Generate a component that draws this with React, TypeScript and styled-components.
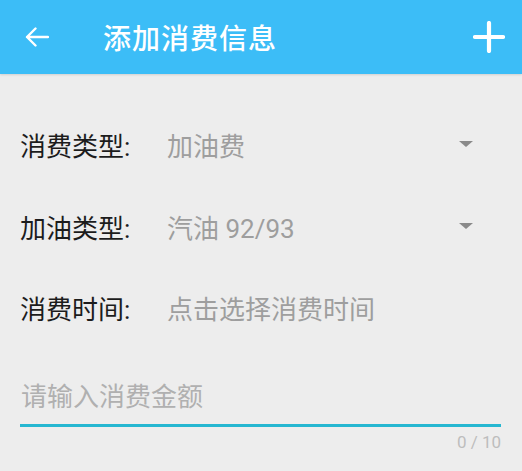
import { FC } from "react";
import styled, { createGlobalStyle } from "styled-components";

const GlobalStyle = createGlobalStyle`
  html, body {
    margin: 0;
    padding: 0;
    background: #ededed;
  }
  body {
    font-family: Roboto, "Noto Sans CJK SC", sans-serif;
  }
`;

const Page = styled.div`
  width: 522px;
  height: 471px;
  background: #ededed;
  overflow: hidden;
`;

const Toolbar = styled.header`
  height: 74px;
  background: #3cbdf7;
  display: flex;
  align-items: center;
  padding: 0 17px 0 25px;
  box-sizing: border-box;
  box-shadow: 0 1px 2px rgba(0, 0, 0, 0.12);
`;

const IconButton = styled.button`
  background: none;
  border: none;
  padding: 0;
  display: flex;
  align-items: center;
  justify-content: center;
  cursor: pointer;
`;

const Title = styled.h1`
  margin: 0 0 0 54px;
  flex: 1;
  font-size: 28px;
  font-weight: 500;
  color: #ffffff;
  letter-spacing: 1px;
`;

const Form = styled.div`
  padding: 42px 21px 0 20px;
`;

const Row = styled.div<{ $gap?: number }>`
  display: flex;
  align-items: center;
  height: 56px;
  margin-top: ${(p) => p.$gap ?? 0}px;
`;

const Label = styled.span`
  width: 147px;
  flex-shrink: 0;
  font-size: 26px;
  color: #1c1c1c;
`;

const Value = styled.span`
  flex: 1;
  font-size: 26px;
  color: #9e9e9e;
`;

const Caret = styled.span`
  width: 0;
  height: 0;
  margin-right: 28px;
  border-left: 7px solid transparent;
  border-right: 7px solid transparent;
  border-top: 6px solid #8a8a8a;
`;

const InputWrap = styled.div`
  margin-top: 47px;
`;

const AmountInput = styled.input`
  display: block;
  width: 100%;
  box-sizing: border-box;
  border: none;
  border-bottom: 3px solid #26b7d1;
  background: transparent;
  outline: none;
  font-family: Roboto, "Noto Sans CJK SC", sans-serif;
  font-size: 26px;
  color: #212121;
  padding: 0 0 12px 1px;
  &::placeholder {
    color: #b0b0b0;
  }
`;

const Counter = styled.div`
  text-align: right;
  margin-top: 5px;
  font-size: 17px;
  color: #bdbdbd;
`;

interface FieldProps {
  label: string;
  value: string;
  dropdown?: boolean;
  gap?: number;
}

const Field: FC<FieldProps> = ({ label, value, dropdown, gap }) => (
  <Row $gap={gap}>
    <Label>{label}</Label>
    <Value>{value}</Value>
    {dropdown && <Caret />}
  </Row>
);

export default function App() {
  return (
    <Page>
      <GlobalStyle />
      <Toolbar>
        <IconButton>
          <svg width="24" height="20" viewBox="0 0 24 20">
            <path
              d="M23 10H2M10.5 1.5L2 10l8.5 8.5"
              stroke="#fff"
              strokeWidth="2.4"
              fill="none"
              strokeLinecap="round"
              strokeLinejoin="round"
            />
          </svg>
        </IconButton>
        <Title>添加消费信息</Title>
        <IconButton>
          <svg width="32" height="32" viewBox="0 0 32 32">
            <path
              d="M16 2v28M2 16h28"
              stroke="#fff"
              strokeWidth="4.2"
              strokeLinecap="round"
            />
          </svg>
        </IconButton>
      </Toolbar>
      <Form>
        <Field label="消费类型:" value="加油费" dropdown />
        <Field label="加油类型:" value="汽油 92/93" dropdown gap={26} />
        <Field label="消费时间:" value="点击选择消费时间" gap={25} />
        <InputWrap>
          <AmountInput placeholder="请输入消费金额" />
          <Counter>0 / 10</Counter>
        </InputWrap>
      </Form>
    </Page>
  );
}
